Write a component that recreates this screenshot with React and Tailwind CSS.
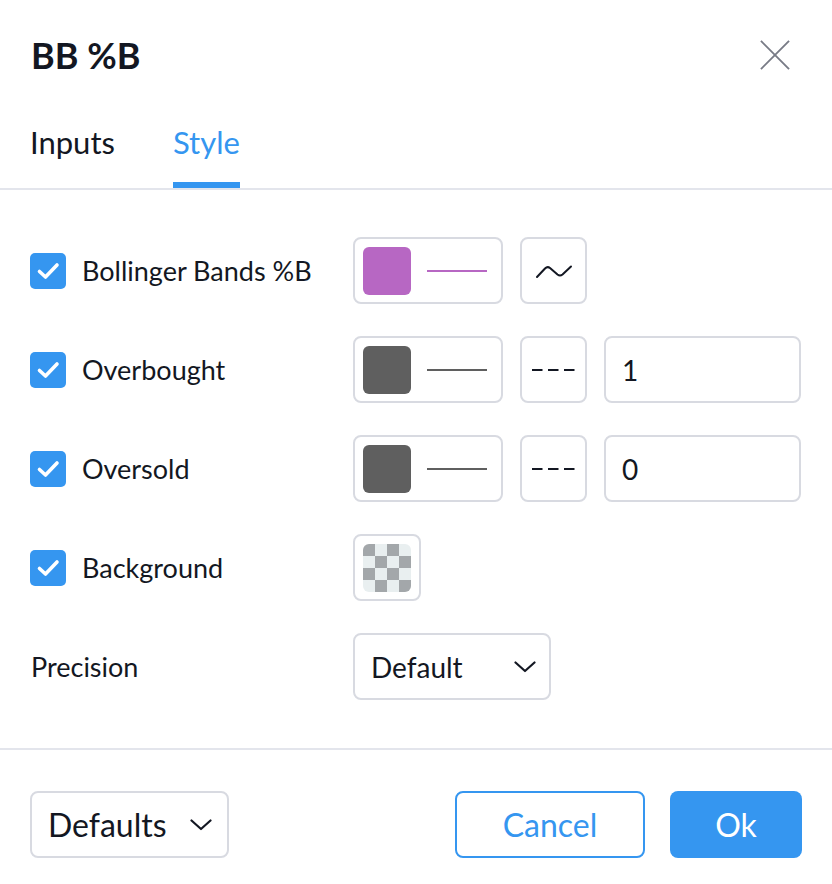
import { useState } from "react";

const Check = () => (
  <span className="w-[36px] h-[36px] rounded-[5px] bg-[#3596f0] flex items-center justify-center shrink-0">
    <svg width="36" height="36" viewBox="0 0 36 36" fill="none">
      <path d="M9.5 18.5 L15.5 24 L27 12" stroke="white" strokeWidth="3.6" strokeLinecap="round" strokeLinejoin="round" />
    </svg>
  </span>
);

const Chevron = () => (
  <svg width="22" height="12" viewBox="0 0 22 12" fill="none">
    <path d="M1.5 1.5 L11 10 L20.5 1.5" stroke="#131722" strokeWidth="2.2" strokeLinecap="round" strokeLinejoin="round" />
  </svg>
);

const ColorLine = ({ swatch, line }) => (
  <button className="w-[150px] h-[67px] border-2 border-[#d8dae1] rounded-[8px] flex items-center pl-[8px] shrink-0">
    <span className={`w-[48px] h-[48px] rounded-[6px] ${swatch}`}></span>
    <span className={`ml-[16px] w-[60px] h-[2px] ${line}`}></span>
  </button>
);

const StyleBtn = ({ children }) => (
  <button className="w-[67px] h-[67px] border-2 border-[#d8dae1] rounded-[8px] flex items-center justify-center shrink-0">
    {children}
  </button>
);

const Wave = () => (
  <svg width="38" height="16" viewBox="0 0 38 16" fill="none">
    <path d="M2 14 L10 5.5 Q12.5 3 15 5 L22.5 11.5 Q25 13.5 27.5 11.5 L36 3.5" stroke="#131722" strokeWidth="2" strokeLinecap="round" strokeLinejoin="round" />
  </svg>
);

const Dashes = () => (
  <svg width="43" height="4" viewBox="0 0 43 4" fill="none">
    <line x1="0" y1="2" x2="43" y2="2" stroke="#131722" strokeWidth="2" strokeDasharray="10.5 5.5" />
  </svg>
);

const ValueInput = ({ value }) => (
  <div className="w-[197px] h-[67px] border-2 border-[#d8dae1] rounded-[8px] flex items-center pl-[16px] text-[28px] shrink-0">
    {value}
  </div>
);

const Checker = () => {
  const cells = [];
  for (let r = 0; r < 4; r++) {
    for (let c = 0; c < 4; c++) {
      cells.push(
        <span key={r + "-" + c} className={(r + c) % 2 === 0 ? "bg-[#a3a7aa]" : "bg-[#e9eff0]"}></span>
      );
    }
  }
  return (
    <button className="w-[68px] h-[67px] border-2 border-[#d8dae1] rounded-[8px] flex items-center justify-center shrink-0">
      <span className="w-[48px] h-[48px] rounded-[6px] overflow-hidden grid grid-cols-4 grid-rows-4">{cells}</span>
    </button>
  );
};

const Row = ({ checked, label, children }) => (
  <div className="h-[67px] flex items-center">
    <div className="w-[323px] flex items-center shrink-0">
      {checked && <Check />}
      <span className={`text-[27px] leading-none ${checked ? "ml-[16px]" : "ml-[1px]"}`}>{label}</span>
    </div>
    <div className="flex items-center gap-[17px]">{children}</div>
  </div>
);

export default function App() {
  const [tab, setTab] = useState("Style");

  return (
    <div className="w-[832px] h-[884px] bg-white flex flex-col font-['Lato',sans-serif] text-[#131722]">
      {/* header */}
      <div className="pt-[20px] pl-[30px] pr-[42px] h-[90px] flex items-start">
        <div className="h-[70px] w-full flex items-center justify-between">
          <h1 className="text-[36px] font-bold leading-none ml-[1px]">BB %B</h1>
          <button className="w-[30px] h-[30px] flex items-center justify-center">
            <svg width="32" height="32" viewBox="0 0 32 32" fill="none">
              <path d="M1 1 L31 31 M31 1 L1 31" stroke="#787b86" strokeWidth="2" />
            </svg>
          </button>
        </div>
      </div>

      {/* tabs */}
      <div className="h-[100px] border-b-2 border-[#e3e5ec] flex pl-[30px]">
        {["Inputs", "Style"].map((t) => (
          <div key={t} className={t === "Inputs" ? "w-[143px]" : ""}>
            <button onClick={() => setTab(t)} className="h-full flex flex-col text-left">
              <span className={`pt-[37px] text-[31px] leading-[31px] ${tab === t ? "text-[#3596f0]" : ""}`}>{t}</span>
              <span className="flex-1"></span>
              <span className={`h-[6px] w-full ${tab === t ? "bg-[#3596f0]" : ""}`}></span>
            </button>
          </div>
        ))}
      </div>

      {/* body */}
      <div className="pt-[47px] pb-[48px] px-[30px] flex flex-col gap-[32px] border-b-2 border-[#e3e5ec]">
        <Row checked label="Bollinger Bands %B">
          <ColorLine swatch="bg-[#b767c3]" line="bg-[#b767c3]" />
          <StyleBtn>
            <Wave />
          </StyleBtn>
        </Row>
        <Row checked label="Overbought">
          <ColorLine swatch="bg-[#5f5f5f]" line="bg-[#5f5f5f]" />
          <StyleBtn>
            <Dashes />
          </StyleBtn>
          <ValueInput value="1" />
        </Row>
        <Row checked label="Oversold">
          <ColorLine swatch="bg-[#5f5f5f]" line="bg-[#5f5f5f]" />
          <StyleBtn>
            <Dashes />
          </StyleBtn>
          <ValueInput value="0" />
        </Row>
        <Row checked label="Background">
          <Checker />
        </Row>
        <Row label="Precision">
          <button className="w-[198px] h-[67px] border-2 border-[#d8dae1] rounded-[8px] flex items-center justify-between pl-[16px] pr-[13px] text-[28px]">
            <span>Default</span>
            <Chevron />
          </button>
        </Row>
      </div>

      {/* footer */}
      <div className="pt-[41px] px-[30px] flex items-center">
        <button className="w-[199px] h-[67px] border-2 border-[#d8dae1] rounded-[8px] flex items-center justify-between pl-[16px] pr-[15px] text-[32px]">
          <span>Defaults</span>
          <Chevron />
        </button>
        <div className="ml-auto flex items-center gap-[25px]">
          <button className="w-[190px] h-[67px] border-2 border-[#3596f0] rounded-[8px] text-[32px] text-[#3596f0]">
            Cancel
          </button>
          <button className="w-[132px] h-[67px] rounded-[8px] bg-[#3596f0] text-[32px] text-white">Ok</button>
        </div>
      </div>
    </div>
  );
}
